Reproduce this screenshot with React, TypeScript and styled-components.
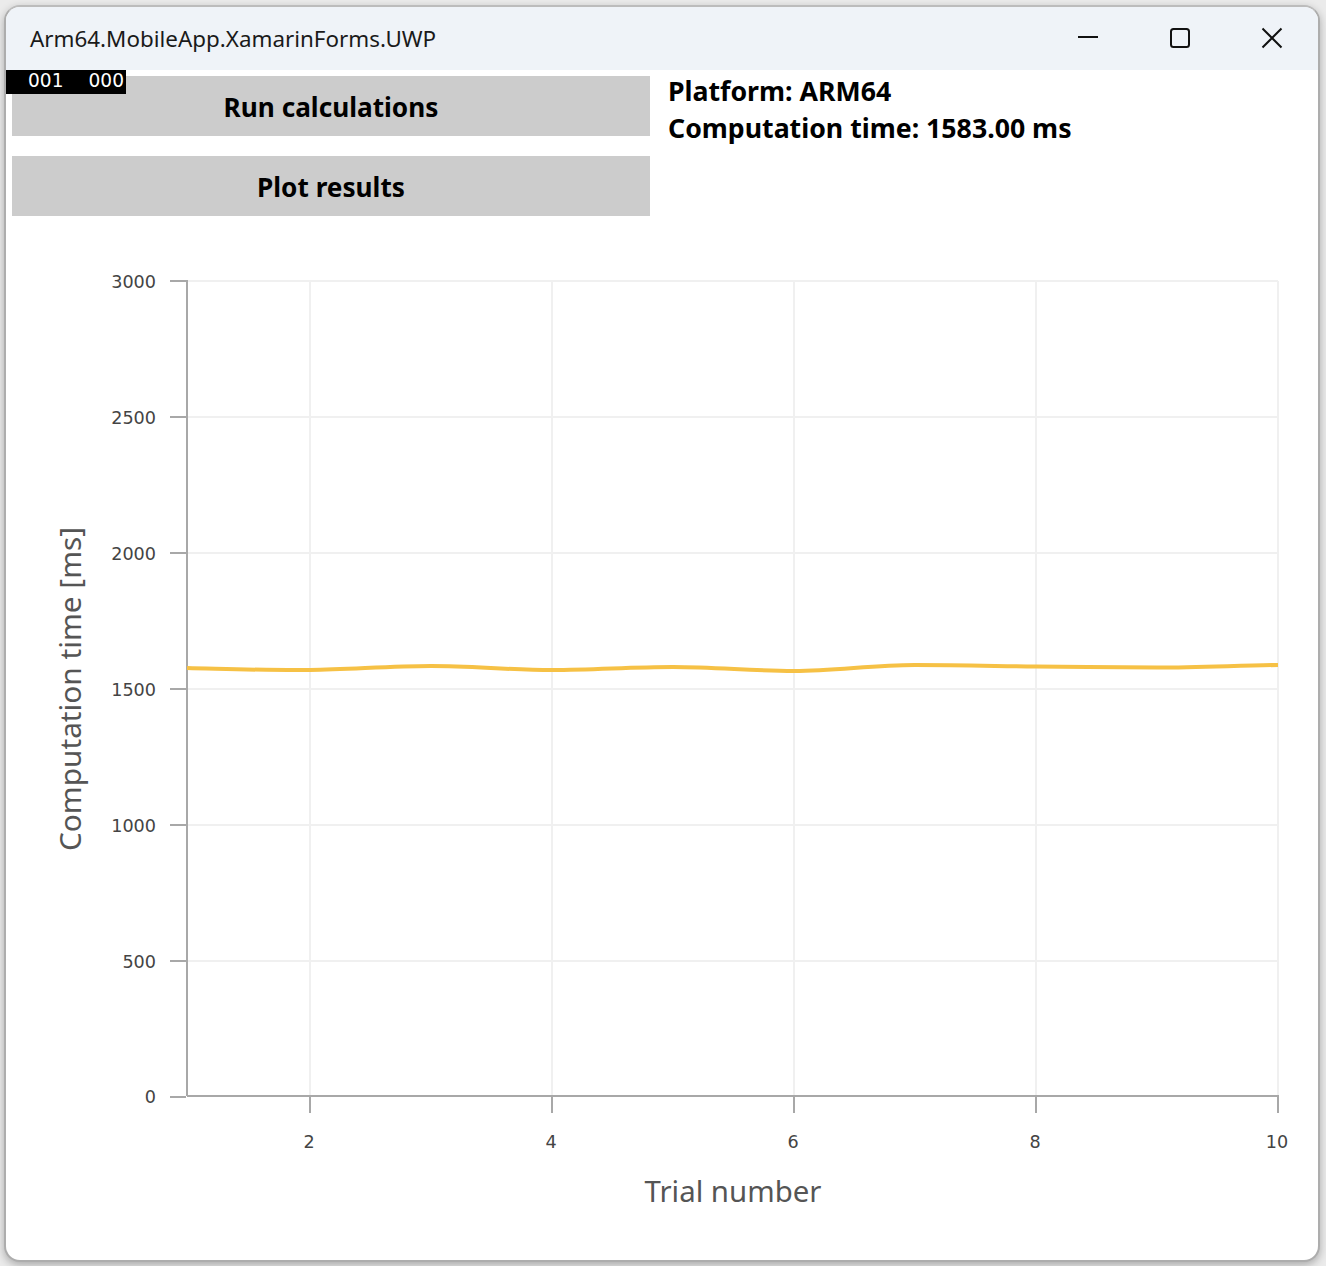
import React from "react";
import styled, { createGlobalStyle } from "styled-components";

const GlobalStyle = createGlobalStyle`
  html, body {
    margin: 0;
    padding: 0;
    background: #e6e6e6;
  }
`;

const uiFont = `"Noto Sans", "Open Sans", sans-serif`;

const Page = styled.div`
  width: 1326px;
  height: 1266px;
  padding: 5px 6px 4px 4px;
  box-sizing: border-box;
  background: #ebebeb;
  overflow: hidden;
`;

const Window = styled.div`
  position: relative;
  height: 100%;
  box-sizing: border-box;
  display: flex;
  flex-direction: column;
  background: #fff;
  border: 2px solid #adadad;
  border-top-color: #bcbcbc;
  border-radius: 16px;
  box-shadow: 0 3px 8px rgba(0, 0, 0, 0.28);
  overflow: hidden;
`;

const TitleBar = styled.div`
  height: 63px;
  flex: none;
  display: flex;
  align-items: center;
  justify-content: space-between;
  background: #eff3f8;
`;

const Title = styled.div`
  margin-left: 24px;
  font-family: ${uiFont};
  font-size: 22.4px;
  color: #1a1a1a;
`;

const Controls = styled.div`
  display: flex;
`;

const ControlButton = styled.div`
  width: 92px;
  height: 61px;
  padding-bottom: 2px;
  display: flex;
  align-items: center;
  justify-content: center;
  color: #111;
`;

const ControlIcon = styled.svg`
  width: 22px;
  height: 22px;
  fill: none;
  stroke: currentColor;
  stroke-width: 2;
`;

const DebugCounter = styled.div`
  position: absolute;
  top: 63px;
  left: 0;
  width: 120px;
  height: 24px;
  background: #000;
  color: #fff;
  font-family: "DejaVu Sans", sans-serif;
  font-size: 18.6px;
  line-height: 22px;
  display: flex;
  justify-content: flex-end;
  gap: 25px;
  padding-right: 2px;
  box-sizing: border-box;
`;

const TopRow = styled.div`
  flex: none;
  display: grid;
  grid-template-columns: 638px 1fr;
  gap: 18px;
  padding: 6px 6px 0;
`;

const ButtonColumn = styled.div`
  display: flex;
  flex-direction: column;
  gap: 20px;
`;

const ActionButton = styled.div`
  height: 60px;
  padding-top: 2px;
  box-sizing: border-box;
  display: flex;
  align-items: center;
  justify-content: center;
  background: #cccccc;
  color: #000;
  font-family: ${uiFont};
  font-weight: 700;
  font-size: 26.2px;
`;

const Summary = styled.div`
  font-family: ${uiFont};
  font-weight: 700;
  font-size: 26.7px;
  line-height: 37px;
  color: #000;
  margin-top: -4px;
`;

const ChartSvg = styled.svg`
  display: block;
  flex: none;
  margin-top: 14px;
  width: 1312px;
  height: 1030px;
`;

const left = 187;
const right = 1278;
const top = 281;
const bottom = 1096;

const yTicks = [
  { label: "3000", y: 281, textY: 287.5 },
  { label: "2500", y: 417, textY: 423.5 },
  { label: "2000", y: 553, textY: 559.5 },
  { label: "1500", y: 689, textY: 695.5 },
  { label: "1000", y: 825, textY: 831.5 },
  { label: "500", y: 961, textY: 967.5 },
  { label: "0", y: 1097, textY: 1102.5 },
];

const xTicks = [
  { label: "2", x: 310 },
  { label: "4", x: 552 },
  { label: "6", x: 794 },
  { label: "8", x: 1036 },
  { label: "10", x: 1278 },
];

const series =
  "M187 668 C 230 669, 270 670.5, 310 670 S 390 666, 431 666 S 510 670, 552 670 S 630 667, 673 667 S 752 671, 794 671 S 872 665, 915 665 S 995 666, 1036 666.5 S 1115 667.5, 1157 667.5 S 1238 665.5, 1278 665";

function Chart() {
  return (
    <ChartSvg viewBox="6 230 1312 1030">
      <g stroke="#f0f0f0" strokeWidth="2">
        {yTicks.slice(0, -1).map((t) => (
          <line key={t.label} x1={left} x2={right} y1={t.y} y2={t.y} />
        ))}
        {xTicks.map((t) => (
          <line key={t.label} x1={t.x} x2={t.x} y1={top} y2={bottom} />
        ))}
      </g>
      <g stroke="#a8a8a8" strokeWidth="2">
        <line x1={left} x2={left} y1={top - 1} y2={bottom} />
        <line x1={left} x2={right + 1} y1={bottom} y2={bottom} />
        {yTicks.map((t) => (
          <line key={t.label} x1={170} x2={left - 1} y1={t.y} y2={t.y} />
        ))}
        {xTicks.map((t) => (
          <line key={t.label} x1={t.x} x2={t.x} y1={bottom} y2={1113} />
        ))}
      </g>
      <path d={series} fill="none" stroke="#f6c145" strokeWidth="4" />
      <g fontFamily="DejaVu Sans, sans-serif" fontSize="17.6" fill="#444">
        {yTicks.map((t) => (
          <text key={t.label} x={156} y={t.textY} textAnchor="end">
            {t.label}
          </text>
        ))}
        {xTicks.map((t) => (
          <text key={t.label} x={t.x - 1} y={1148} textAnchor="middle">
            {t.label}
          </text>
        ))}
      </g>
      <g fontFamily="Noto Sans, Open Sans, sans-serif" fill="#555">
        <text x={733} y={1202} fontSize="29.4" textAnchor="middle">
          Trial number
        </text>
        <text
          transform="translate(81 689) rotate(-90)"
          fontSize="29.8"
          textAnchor="middle"
        >
          Computation time [ms]
        </text>
      </g>
    </ChartSvg>
  );
}

export default function App() {
  return (
    <Page>
      <GlobalStyle />
      <Window>
        <TitleBar>
          <Title>Arm64.MobileApp.XamarinForms.UWP</Title>
          <Controls>
            <ControlButton>
              <ControlIcon viewBox="0 0 22 22">
                <path d="M1 10h20" />
              </ControlIcon>
            </ControlButton>
            <ControlButton>
              <ControlIcon viewBox="0 0 22 22">
                <rect x="2" y="2" width="18" height="18" rx="2.5" />
              </ControlIcon>
            </ControlButton>
            <ControlButton>
              <ControlIcon viewBox="0 0 22 22">
                <path d="M1.5 1.5l19 19M20.5 1.5l-19 19" />
              </ControlIcon>
            </ControlButton>
          </Controls>
        </TitleBar>
        <DebugCounter>
          <span>001</span>
          <span>000</span>
        </DebugCounter>
        <TopRow>
          <ButtonColumn>
            <ActionButton>Run calculations</ActionButton>
            <ActionButton>Plot results</ActionButton>
          </ButtonColumn>
          <Summary>
            Platform: ARM64
            <br />
            Computation time: 1583.00 ms
          </Summary>
        </TopRow>
        <Chart />
      </Window>
    </Page>
  );
}
